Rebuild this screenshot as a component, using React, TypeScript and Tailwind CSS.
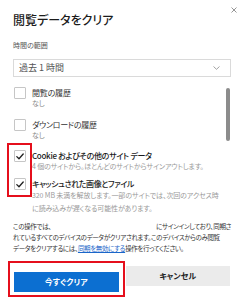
import React from "react";

function Check({ checked }: { checked?: boolean }) {
  return (
    <div className="w-[12px] h-[12px] shrink-0 rounded-[1px] border border-[#c6c6c6] bg-white flex items-center justify-center">
      {checked && (
        <svg width="8" height="7" viewBox="0 0 8 7" fill="none">
          <path d="M0.8 3.6 L3 5.8 L7.2 1" stroke="#1f1f1f" strokeWidth="1.3" strokeLinecap="round" strokeLinejoin="round" />
        </svg>
      )}
    </div>
  );
}

export default function App() {
  return (
    <div className="relative w-[245px] h-[300px] overflow-hidden bg-white font-['Noto_Sans_CJK_JP','Noto_Sans',sans-serif] [font-feature-settings:'palt'] text-[#333]">
      <button className="absolute right-[8px] top-[6px] w-[7px] h-[7px] flex items-center justify-center" aria-label="閉じる">
        <svg width="6" height="6" viewBox="0 0 6 6">
          <path d="M0.5 0.5 L5.5 5.5 M5.5 0.5 L0.5 5.5" stroke="#8a8a8a" strokeWidth="0.9" />
        </svg>
      </button>

      <div className="pl-[13px] pr-[14px] pt-[11px]">
        <h1 className="text-[12px] leading-[18px] font-medium text-[#1b1b1b]">閲覧データをクリア</h1>

        <div className="mt-[11px] text-[7px] leading-[10px] text-[#555]">時間の範囲</div>

        <div className="mt-[9px] h-[18px] border border-[#dadada] flex items-center justify-between pl-[5px] pr-[10px]">
          <span className="text-[9px] leading-[12px] text-[#555]">過去 1 時間</span>
          <svg width="7" height="4" viewBox="0 0 7 4" fill="none">
            <path d="M0.5 0.5 L3.5 3.3 L6.5 0.5" stroke="#8a8a8a" strokeWidth="0.8" />
          </svg>
        </div>

        <div className="mt-[10px] flex">
          <div className="flex-1 min-w-0 flex flex-col">
            <div className="flex items-start gap-[6px] pl-[1px]">
              <Check />
              <div className="whitespace-nowrap">
                <div className="text-[8px] tracking-[-0.2px] leading-[11px] text-[#333]">閲覧の履歴</div>
                <div className="text-[7px] leading-[11px] text-[#8a8a8a]">なし</div>
              </div>
            </div>
            <div className="mt-[10px] flex items-start gap-[6px] pl-[1px]">
              <Check />
              <div className="whitespace-nowrap">
                <div className="text-[8px] tracking-[-0.3px] leading-[11px] text-[#333]">ダウンロードの履歴</div>
                <div className="text-[7px] leading-[11px] text-[#8a8a8a]">なし</div>
              </div>
            </div>

            <div className="relative mt-[9px]">
              <div className="absolute -left-[6px] -top-[7px] w-[25px] h-[54px] border-2 border-[#e50f1c] pointer-events-none" />
              <div className="flex items-start gap-[6px] pl-[1px]">
                <Check checked />
                <div className="whitespace-nowrap">
                  <div className="text-[8px] tracking-[-0.3px] leading-[11px] font-medium text-[#1a1a1a]">Cookie およびその他のサイト データ</div>
                  <div className="text-[7px] tracking-[-0.15px] leading-[11px] text-[#9a9a9a]">4 個のサイトから。ほとんどのサイトからサインアウトします。</div>
                </div>
              </div>
              <div className="mt-[6px] flex items-start gap-[6px] pl-[1px]">
                <Check checked />
                <div className="whitespace-nowrap">
                  <div className="text-[8px] tracking-[-0.4px] leading-[11px] font-medium text-[#1a1a1a]">キャッシュされた画像とファイル</div>
                  <div className="text-[7px] tracking-[-0.1px] leading-[13px] text-[#9a9a9a]">
                    320 MB 未満を解放します。一部のサイトでは、次回のアクセス時
                    <br />
                    に読み込みが遅くなる可能性があります。
                  </div>
                </div>
              </div>
            </div>
          </div>
          <div className="w-[4px] mr-[1px] shrink-0">
            <div className="mt-[1px] h-[53px] rounded-full bg-[#8c8c8c]" />
          </div>
        </div>

        <div className="mt-[6px] text-[6.5px] tracking-[-0.35px] leading-[11px] text-[#333] whitespace-nowrap">
          <div className="flex justify-between">
            <span>この操作では、</span>
            <span>にサインインしており、同期さ</span>
          </div>
          <div>れているすべてのデバイスのデータがクリアされます。このデバイスからのみ閲覧</div>
          <div>
            データをクリアするには、<a className="text-[#1a66c9] underline">同期を無効にする</a>操作を行ってください。
          </div>
        </div>

        <div className="mt-[12px] flex gap-[7px] px-[1px]">
          <div className="relative flex-1">
            <div className="absolute -left-[6px] -right-[6px] -top-[5px] -bottom-[5px] border-2 border-[#e50f1c] pointer-events-none" />
            <button className="w-full h-[20px] bg-[#0c6fd1] text-white text-[8px] font-bold leading-[20px]">今すぐクリア</button>
          </div>
          <button className="flex-1 h-[20px] bg-[#ebebeb] text-[#222] text-[8px] font-bold leading-[20px]">キャンセル</button>
        </div>
      </div>
    </div>
  );
}
